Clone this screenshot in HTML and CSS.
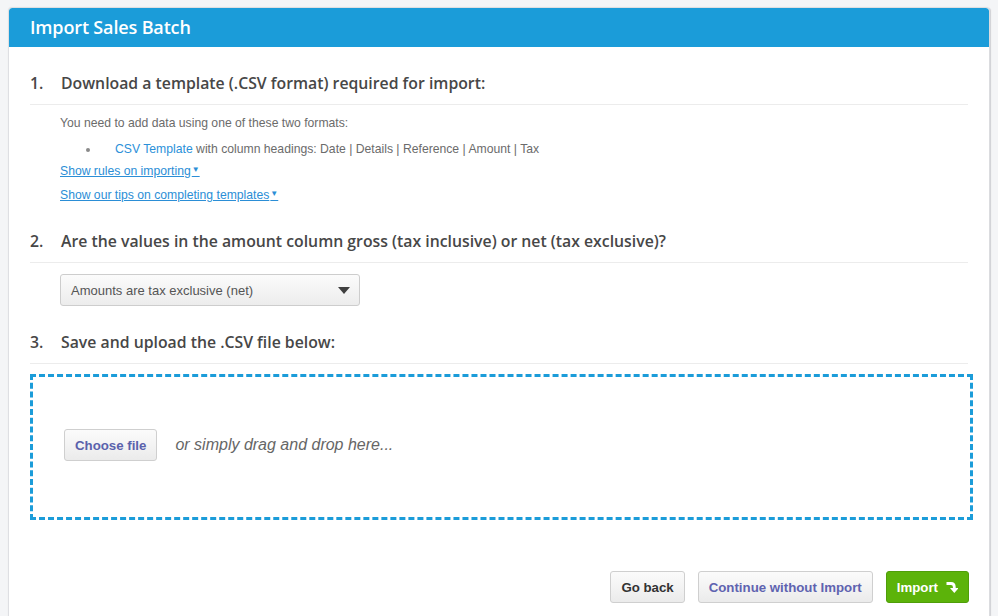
FILE: index.html
```html
<!DOCTYPE html>
<html>
<head>
<meta charset="utf-8">
<title>Import Sales Batch</title>
<link rel="stylesheet" href="styles.css">
</head>
<body>
<div class="panel">
  <div class="panel-header">Import Sales Batch</div>
  <div class="panel-body">
    <h2 class="step"><span class="num">1.</span><span>Download a template (.CSV format) required for import:</span></h2>
    <div class="step-content">
      <p class="note">You need to add data using one of these two formats:</p>
      <ul class="formats">
        <li><a class="tpl" href="#">CSV Template</a> with column headings: Date | Details | Reference | Amount | Tax</li>
      </ul>
      <a class="toggle" href="#">Show rules on importing<span class="caret">▼</span></a>
      <a class="toggle toggle-2" href="#">Show our tips on completing templates<span class="caret">▼</span></a>
    </div>

    <h2 class="step step-2"><span class="num">2.</span><span>Are the values in the amount column gross (tax inclusive) or net (tax exclusive)?</span></h2>
    <div class="step-content">
      <div class="select">
        <span>Amounts are tax exclusive (net)</span>
        <span class="arrow"></span>
      </div>
    </div>

    <h2 class="step step-3"><span class="num">3.</span><span>Save and upload the .CSV file below:</span></h2>
    <div class="dropzone">
      <button class="btn btn-choose">Choose file</button>
      <span class="drop-text">or simply drag and drop here...</span>
    </div>

    <div class="actions">
      <button class="btn">Go back</button>
      <button class="btn btn-alt">Continue without Import</button>
      <button class="btn btn-primary">Import
        <svg class="ico" width="12" height="14" viewBox="0 0 12 14"><path d="M0.5 3.5 H5 Q8.3 3.5 8.3 7 V8.5" fill="none" stroke="#fff" stroke-width="2.8"/><polygon points="4,8 12.6,8 8.3,13" fill="#fff"/></svg>
      </button>
    </div>
  </div>
</div>
</body>
</html>
```

FILE: styles.css
```css
* { box-sizing: border-box; }
html, body { margin: 0; padding: 0; }
body {
  background: #f4f5f7;
  font-family: "Liberation Sans", Arial, sans-serif;
  color: #666;
  height: 616px;
  overflow: hidden;
}
.panel {
  margin: 8px 0 0 9px;
  width: 980px;
  height: 608px;
  background: #fff;
  border-radius: 3px 3px 0 0;
  box-shadow: 0 0 1px 1px #dcdde0, 2px 0 1px #cfd0d3;
  overflow: hidden;
}
.panel-header {
  height: 39px;
  background: #1b9cd9;
  color: #fff;
  font-family: "Open Sans", sans-serif;
  font-weight: 600;
  font-size: 18px;
  letter-spacing: -0.15px;
  line-height: 39px;
  padding-left: 21px;
  border-radius: 3px 3px 0 0;
}
.panel-body {
  padding: 25px 21px 0 21px;
}
.step {
  display: flex;
  margin: 0;
  font-family: "Open Sans", sans-serif;
  font-weight: 600;
  font-size: 15.8px;
  line-height: 22px;
  color: #474747;
  padding-bottom: 10px;
  border-bottom: 1px solid #ececec;
}
.step .num { width: 31px; flex: none; }
.step-2 { margin-top: 23px; }
.step-3 { margin-top: 25px; }
.step-content {
  padding-left: 30px;
  font-size: 12.2px;
}
.note {
  margin: 9px 0 0;
  line-height: 18px;
  color: #6b6b6b;
}
.formats {
  margin: 8px 0 2px;
  padding-left: 55px;
  line-height: 18px;
  color: #6b6b6b;
  list-style: none;
  position: relative;
}
.formats li::before {
  content: "";
  position: absolute;
  left: 26px;
  top: 8px;
  width: 4px;
  height: 4px;
  border-radius: 50%;
  background: #8a8a8a;
}
.tpl { color: #2b90d9; text-decoration: none; }
.toggle {
  display: block;
  width: max-content;
  line-height: 23px;
  color: #2b8ed6;
  text-decoration: underline;
}
.toggle-2 { margin-top: 1px; }
.caret { font-size: 8px; line-height: 0; vertical-align: 3px; margin-left: 1px; }
.select {
  margin-top: 11px;
  width: 300px;
  height: 32px;
  border: 1px solid #cdcdcd;
  border-radius: 3px;
  background: linear-gradient(#fbfbfb, #ececec);
  display: flex;
  align-items: center;
  justify-content: space-between;
  padding: 0 9px 0 10px;
  font-size: 13px;
  color: #555;
}
.arrow {
  width: 0; height: 0;
  border-left: 6px solid transparent;
  border-right: 6px solid transparent;
  border-top: 7px solid #3f3f3f;
}
.dropzone {
  margin: 10px -5px 0 0;
  height: 146px;
  border: 3px dashed #1b9cd9;
  display: flex;
  align-items: center;
  padding: 0 0 4px 31px;
}
.btn {
  height: 32px;
  border: 1px solid #cfcfcf;
  border-radius: 3px;
  background: linear-gradient(#fbfbfb, #ebebeb);
  font-family: "Liberation Sans", Arial, sans-serif;
  font-weight: bold;
  font-size: 13.25px;
  color: #333;
  padding: 0 10px;
  white-space: nowrap;
  cursor: pointer;
}
.btn-choose { color: #5a62ac; }
.drop-text {
  margin-left: 18px;
  font-style: italic;
  font-size: 16px;
  color: #666;
}
.actions {
  margin: 51px -1px 0 0;
  display: flex;
  justify-content: flex-end;
  gap: 13px;
}
.btn-alt { color: #5f63b0; }
.btn-primary {
  background: #5cb30a;
  border-color: #4f9e09;
  color: #fff;
  display: flex;
  align-items: center;
  justify-content: center;
  gap: 8px;
}
.ico { display: block; }
```
